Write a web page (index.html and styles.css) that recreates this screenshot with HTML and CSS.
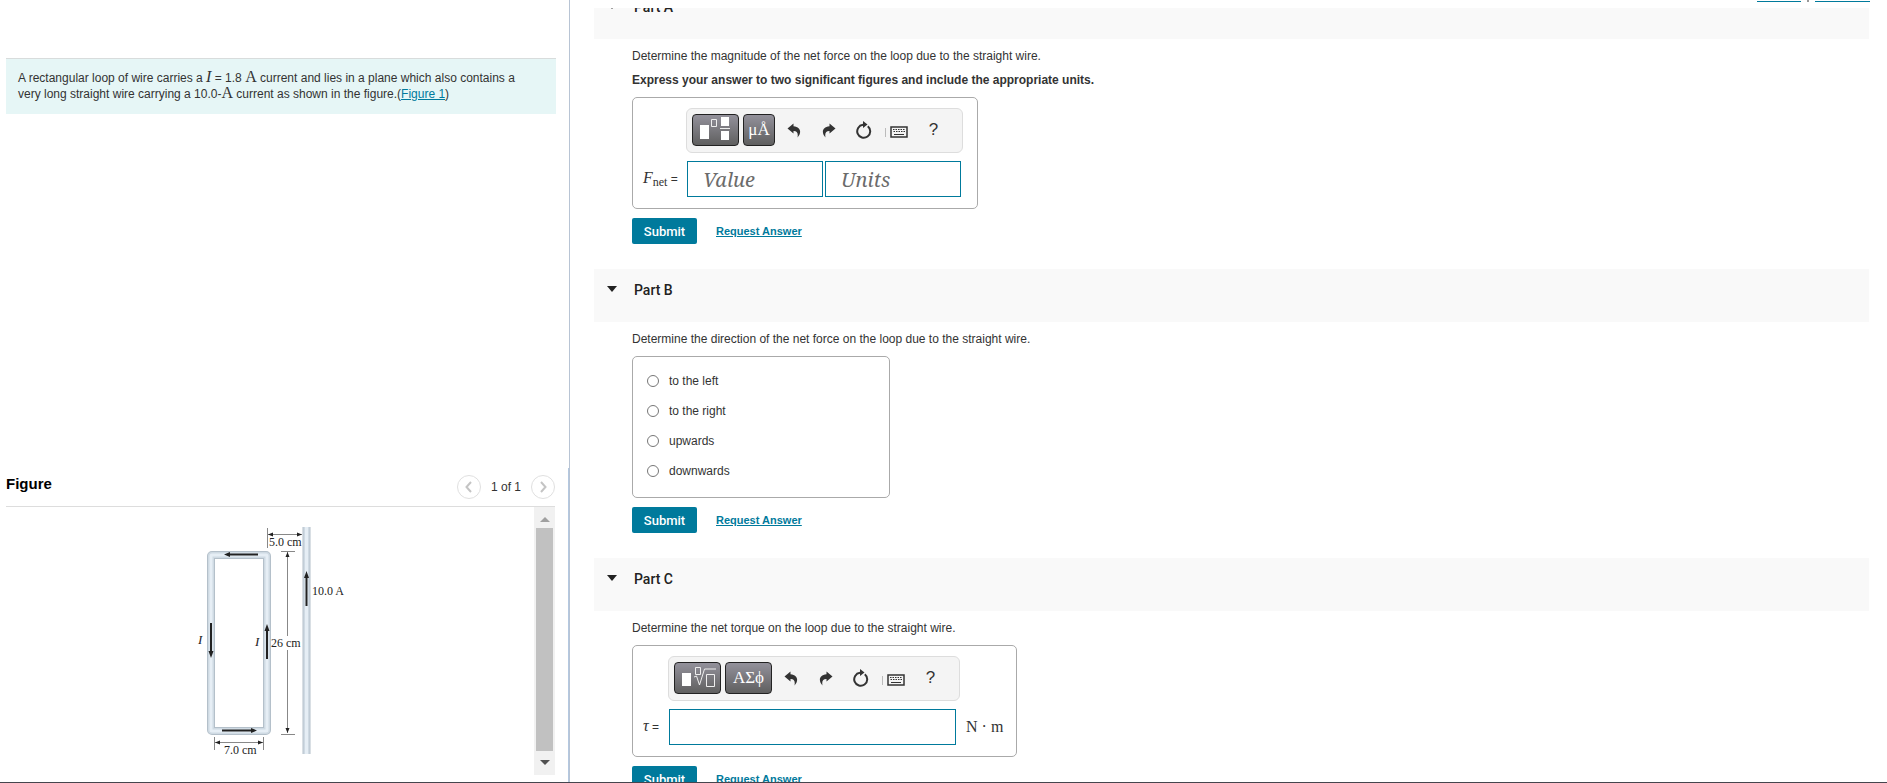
FILE: index.html
```html
<!DOCTYPE html>
<html lang="en">
<head>
<meta charset="utf-8">
<title>Net force on a current loop</title>
<link rel="stylesheet" href="styles.css">
</head>
<body>
<svg class="defs" aria-hidden="true">
  <symbol id="undo" viewBox="0 0 14 15"><path d="M6.500 0.500 L0.500 5.500 L6.500 10.500 V8 C9.500 7.800 11.500 9.500 10.500 14.500 C14.500 10.500 14.500 4 6.500 3.200 Z"/></symbol>
  <symbol id="redo" viewBox="0 0 14 15"><path d="M7.500 0.500 L13.500 5.500 L7.500 10.500 V8 C4.500 7.800 2.500 9.500 3.500 14.500 C-0.500 10.500 -0.500 4 7.500 3.200 Z"/></symbol>
  <symbol id="reset" viewBox="0 0 18 18"><path d="M12.800 5.200 A6.500 6.500 0 1 1 8 3.800" fill="none" stroke="currentColor" stroke-width="2"/><path d="M8 0 L12.500 3.500 L8 7 Z"/></symbol>
  <symbol id="keyboard" viewBox="0 0 24 12"><path d="M0.500 2 V11" stroke="#bbb" fill="none"/><rect x="6" y="1" width="16" height="10" fill="none" stroke="currentColor" stroke-width="1.500"/><path d="M8 3.500 H20 M8.500 5.500 H20" stroke="currentColor" stroke-dasharray="1.500 1" fill="none"/><path d="M9 8.500 H19" stroke="currentColor" fill="none"/></symbol>
</svg>
<header class="topbar">
  <nav class="toplinks"><a href="#review" aria-label="Review"></a><span class="tick"></span><a href="#constants" aria-label="Constants"></a></nav>
</header>
<div class="page">
  <aside class="left">
    <section class="problem">A rectangular loop of wire carries a <i class="math">I</i> = 1.8 <span class="math">A</span> current and lies in a plane which also contains a very long straight wire carrying a 10.0-<span class="math">A</span> current as shown in the figure.(<a href="#figure">Figure 1</a>)</section>
    <section class="figure" id="figure">
      <div class="figure-head">
        <h2>Figure</h2>
        <div class="pager">
          <button class="round" aria-label="Previous figure"><svg width="10" height="12" viewBox="0 0 10 12"><path d="M7 1 L2.500 6 L7 11"/></svg></button>
          <span>1 of 1</span>
          <button class="round" aria-label="Next figure"><svg width="10" height="12" viewBox="0 0 10 12"><path d="M3 1 L7.500 6 L3 11"/></svg></button>
        </div>
      </div>
      <div class="figure-body">
        <svg class="diagram" width="190" height="250" viewBox="0 0 190 250" role="img" aria-label="Rectangular loop beside a long straight wire">
          <g class="wire">
            <rect x="31" y="40" width="56" height="176" rx="1" class="w1"/>
            <rect x="31" y="40" width="56" height="176" rx="1" class="w2"/>
            <rect x="31" y="40" width="56" height="176" rx="1" class="w3"/>
            <path d="M126.500 12 V239" class="w1"/><path d="M126.500 12 V239" class="w2"/><path d="M126.500 12 V239" class="w3"/>
          </g>
          <g class="dim">
            <path d="M87.500 13 V33 M88 19.500 H122 M101 36.500 H115 M107.500 37 V121 M107.500 135 V218 M101 219.500 H115 M34.500 222 V235 M83.500 222 V235 M35 227.500 H83"/>
          </g>
          <path class="heads" d="M88 19.500 l5 -2 v4z M122 19.500 l-5 -2 v4z M107.500 37 l-2 5 h4z M107.500 218 l-2 -5 h4z M35 227.500 l5 -2 v4z M83 227.500 l-5 -2 v4z"/>
          <path class="current" d="M78 39.500 H49 M31 108 V138 M87 144 V114 M42 215.500 H72 M126.500 91 V61"/>
          <path class="heads" d="M44 39.500 l6 -2.500 v5z M31 143 l-2.500 -7 h5z M87 109 l-2.500 7 h5z M77 215.500 l-6 -2.500 v5z M126.500 56 l-2.500 7 h5z"/>
          <text x="89" y="31">5.0 cm</text>
          <text x="91" y="132">26 cm</text>
          <text x="132" y="80">10.0 A</text>
          <text x="44" y="239">7.0 cm</text>
          <text x="18" y="129" class="it">I</text>
          <text x="75" y="131" class="it">I</text>
        </svg>
        <div class="scroll" aria-hidden="true"><span class="up"></span><span class="thumb"></span><span class="down"></span></div>
      </div>
    </section>
  </aside>
  <main class="right">
    <section class="part">
      <h3 class="part-head first"><span class="caret"></span>Part A</h3>
      <div class="part-body">
        <p>Determine the magnitude of the net force on the loop due to the straight wire.</p>
        <p><strong>Express your answer to two significant figures and include the appropriate units.</strong></p>
        <div class="answer answer-a">
          <div class="tools">
            <button class="dark" aria-label="Templates"><svg width="32" height="26" viewBox="0 0 32 26"><path d="M0 8h9v14h-9z M21 0h8v9h-8z M21 14h8v9h-8z" fill="#fff"/><path d="M11.500 2.500h5v7h-5z M20 11.500h10" fill="none" stroke="#eee"/></svg></button>
            <button class="dark units">μÅ</button>
            <button class="tool" aria-label="Undo"><svg width="14" height="15"><use href="#undo"/></svg></button>
            <button class="tool" aria-label="Redo"><svg width="14" height="15"><use href="#redo"/></svg></button>
            <button class="tool" aria-label="Reset"><svg width="18" height="18"><use href="#reset"/></svg></button>
            <button class="tool keys" aria-label="Keyboard shortcuts"><svg width="24" height="12"><use href="#keyboard"/></svg></button>
            <button class="tool help">?</button>
          </div>
          <label class="lhs" for="val"><span class="math"><i>F</i><sub>net</sub></span> =</label>
          <div class="fields"><input id="val" type="text" placeholder="Value"><input type="text" placeholder="Units" aria-label="Units"></div>
        </div>
        <div class="actions"><button class="submit">Submit</button><a href="#a">Request Answer</a></div>
      </div>
    </section>
    <section class="part">
      <h3 class="part-head"><span class="caret"></span>Part B</h3>
      <div class="part-body">
        <p>Determine the direction of the net force on the loop due to the straight wire.</p>
        <div class="choices">
          <label><input type="radio" name="dir">to the left</label>
          <label><input type="radio" name="dir">to the right</label>
          <label><input type="radio" name="dir">upwards</label>
          <label><input type="radio" name="dir">downwards</label>
        </div>
        <div class="actions"><button class="submit">Submit</button><a href="#b">Request Answer</a></div>
      </div>
    </section>
    <section class="part">
      <h3 class="part-head"><span class="caret"></span>Part C</h3>
      <div class="part-body">
        <p>Determine the net torque on the loop due to the straight wire.</p>
        <div class="answer answer-c">
          <div class="tools">
            <button class="dark" aria-label="Templates"><svg width="36" height="26" viewBox="0 0 36 26"><path d="M2 8h9v13h-9z" fill="#fff"/><path d="M15.500 2.500h5v7h-5z M14 12l2.500 -1 3 9 5 -16 h12 M26.500 9.500h8v12h-8z" fill="none" stroke="#eee"/></svg></button>
            <button class="dark greek">ΑΣϕ</button>
            <button class="tool" aria-label="Undo"><svg width="14" height="15"><use href="#undo"/></svg></button>
            <button class="tool" aria-label="Redo"><svg width="14" height="15"><use href="#redo"/></svg></button>
            <button class="tool" aria-label="Reset"><svg width="18" height="18"><use href="#reset"/></svg></button>
            <button class="tool keys" aria-label="Keyboard shortcuts"><svg width="24" height="12"><use href="#keyboard"/></svg></button>
            <button class="tool help">?</button>
          </div>
          <label class="lhs" for="tau"><i class="math">τ</i> =</label>
          <div class="fields"><input id="tau" type="text"></div>
          <span class="math rhs">N · m</span>
        </div>
        <div class="actions"><button class="submit">Submit</button><a href="#c">Request Answer</a></div>
      </div>
    </section>
  </main>
</div>
</body>
</html>
```

FILE: styles.css
```css
* { box-sizing: border-box; }
body {
  margin: 0;
  height: 100vh;
  display: flex;
  flex-direction: column;
  overflow: hidden;
  border-bottom: 1px solid #45454d;
  font: 12px/16px "Liberation Sans", Arial, sans-serif;
  color: #333;
  background: #fff;
}
button, input { font: inherit; color: inherit; margin: 0; }
a { color: #007a9c; }
strong { font-weight: 700; }
.defs { display: none; }
.math { font-family: "Liberation Serif", "Times New Roman", serif; font-size: 16px; line-height: 12px; }

/* Top bar */
.topbar { position: absolute; top: 0; left: 571px; right: 0; height: 8px; background: #fff; z-index: 1; }
.toplinks { display: flex; justify-content: flex-end; gap: 6px; padding-right: 17px; height: 2px; }
.toplinks a { width: 55px; border-bottom: 1px solid #007a9c; }
.toplinks a:first-child { width: 44px; }
.tick { width: 2px; height: 2px; background: #999; }

.page { flex: 1; min-height: 0; display: grid; grid-template-columns: 570px 1fr; }

/* Left column */
.left { display: flex; flex-direction: column; justify-content: space-between; border-right: 1px solid #b8c4d4; min-height: 0; }
.problem { margin: 58px 13px 0 6px; padding: 11px 28px 12px 12px; background: #e6f6f6; border-top: 1px solid #d8dcdc; }
.figure { border-right: 1px solid #b4c8e0; padding: 2px 13px 7px 6px; }
.figure-head { display: flex; justify-content: space-between; align-items: center; height: 36px; padding-bottom: 2px; }
.figure h2 { margin: 0 0 6px; font-size: 15px; line-height: 20px; color: #000; }
.pager { display: flex; align-items: center; gap: 10px; }
.round { width: 24px; height: 24px; padding: 0; border: 1px solid #e0e0e0; border-radius: 50%; background: #fff; display: flex; align-items: center; justify-content: center; }
.round path { fill: none; stroke: #c4c4c4; stroke-width: 2; }
.figure-body { display: flex; justify-content: space-between; border-top: 1px solid #ddd; }
.diagram { margin: 8px 0 0 174px; }
.diagram text { font: 12px "Liberation Serif", serif; fill: #222; }
.diagram .it { font-style: italic; font-size: 13px; }
.wire { fill: none; }
.w1 { stroke: #b4c0ca; stroke-width: 8; }
.w2 { stroke: #cfdae3; stroke-width: 6; }
.w3 { stroke: #e6eef5; stroke-width: 3; }
.dim { stroke: #888; fill: none; }
.heads { fill: #222; }
.current { stroke: #222; stroke-width: 2; fill: none; }
.scroll { display: flex; flex-direction: column; align-items: center; justify-content: space-between; width: 21px; height: 268px; padding: 10px 2px; background: #f1f1f1; }
.up, .down { border: 5px solid transparent; }
.up { border-top: 0; border-bottom-color: #a0a0a0; }
.down { border-bottom: 0; border-top-color: #505050; }
.thumb { width: 17px; height: 223px; margin-bottom: 3px; background: #c1c1c1; }

/* Right column */
.right { padding: 0 18px 0 24px; min-height: 0; overflow: hidden; }
.part-head { display: flex; gap: 17px; height: 53px; margin: 0; padding: 11px 13px; background: #f9f9f9; font: 500 14px/20px Roboto, "Liberation Sans", sans-serif; color: #222; }
.part-head.first { margin-top: -14px; }
.caret { align-self: flex-start; margin-top: 6px; border: 5px solid transparent; border-top: 6px solid #222; border-bottom: 0; }
.part-body { padding: 9px 38px 25px; }
.part-body p { margin: 0 0 8px; }
.part-body .answer, .part-body .choices { margin-top: 9px; border: 1px solid #aaa; border-radius: 5px; }
.answer { display: grid; width: max-content; height: 112px; padding: 10px; align-content: start; align-items: center; row-gap: 8px; }
.answer-a { grid-template-columns: 43px auto; padding-right: 14px; }
.answer-c { grid-template-columns: 25px auto auto; padding-right: 13px; }
.tools { grid-column: 2; display: flex; align-items: center; height: 45px; padding: 0 5px 1px; border: 1px solid #ddd; border-radius: 6px; background: #f4f4f4; }
.answer-a .tools { width: 277px; }
.answer-c .tools { width: 292px; }
.lhs { grid-column: 1; white-space: nowrap; }
.lhs sub { font-size: 12px; line-height: 8px; vertical-align: -3px; }
.fields { display: flex; gap: 2px; padding-left: 1px; }
.fields input { width: 136px; height: 36px; padding: 0 15px; border: 1px solid #007a9c; border-radius: 0; background: #fff; font: 20px "Noto Serif", "DejaVu Serif", serif; }
.answer-c .fields input { width: 287px; }
.fields input::placeholder { font-style: italic; color: #6b6b6b; opacity: 1; }
.rhs { padding-left: 6px; }
.dark { width: 47px; height: 32px; margin-right: 4px; padding: 0; display: flex; align-items: center; justify-content: center; border: 1px solid #222; border-radius: 4px; background: linear-gradient(#93919b, #5f5f5f); color: #fff; font: 17px "Liberation Serif", serif; }
.units { width: 32px; }
.units, .greek { margin-right: 1px; }
.tool { width: 35px; height: 32px; padding: 0; border: 0; background: none; display: flex; align-items: center; justify-content: center; fill: currentColor; }
.keys { width: 31px; padding-top: 3px; }
.help { width: 43px; font-size: 17px; }
.actions { display: flex; align-items: center; gap: 19px; margin-top: 9px; }
.actions a { font-size: 11px; font-weight: 700; }
.submit { width: 65px; height: 26px; padding: 0; border: 0; border-radius: 2px; background: #007a9c; color: #fff; font: 500 13px Roboto, "Liberation Sans", sans-serif; }
.choices { display: flex; flex-direction: column; gap: 14px; width: 258px; height: 142px; padding: 16px 14px; }
.choices label { display: flex; align-items: center; gap: 10px; }
.choices input { width: 12px; height: 12px; }
```
